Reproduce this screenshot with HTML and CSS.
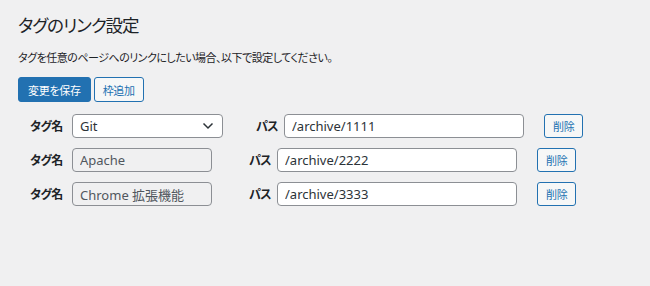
FILE: index.html
```html
<!DOCTYPE html>
<html lang="ja">
<head>
    <meta charset="UTF-8">
    <meta name="viewport" content="width=device-width, initial-scale=1.0">
    <title>タグのリンク設定</title>
    <link rel="stylesheet" href="styles.css">
</head>
<body>
    <div class="wrap">
        <h1 class="page-title">タグのリンク設定</h1>
        <p class="description">タグを任意のページへのリンクにしたい場合、以下で設定してください。</p>

        <div class="actions">
            <button class="button button-primary">変更を保存</button>
            <button class="button">枠追加</button>
        </div>

        <div class="link-rows">
            <div class="link-row">
                <div class="field field-tag field-select">
                    <label class="field-label">タグ名</label>
                    <div class="select">
                        <span>Git</span>
                        <svg class="chevron" width="12" height="8" viewBox="0 0 12 8"><path d="M1.5 1.5 6 6 10.5 1.5" fill="none" stroke="#2c3338" stroke-width="1.5"/></svg>
                    </div>
                </div>
                <div class="field field-path">
                    <label class="field-label">パス</label>
                    <input class="text-input" type="text" value="/archive/1111">
                </div>
                <button class="button button-small">削除</button>
            </div>

            <div class="link-row">
                <div class="field field-tag">
                    <label class="field-label">タグ名</label>
                    <input class="text-input disabled" type="text" value="Apache" disabled>
                </div>
                <div class="field field-path">
                    <label class="field-label">パス</label>
                    <input class="text-input" type="text" value="/archive/2222">
                </div>
                <button class="button button-small">削除</button>
            </div>

            <div class="link-row">
                <div class="field field-tag">
                    <label class="field-label">タグ名</label>
                    <input class="text-input disabled" type="text" value="Chrome 拡張機能" disabled>
                </div>
                <div class="field field-path">
                    <label class="field-label">パス</label>
                    <input class="text-input" type="text" value="/archive/3333">
                </div>
                <button class="button button-small">削除</button>
            </div>
        </div>
    </div>
</body>
</html>
```

FILE: styles.css
```css
body {
    margin: 0;
    background-color: #f0f0f1;
    color: #1d2327;
    font-family: "Noto Sans", "Noto Sans CJK JP", sans-serif;
    font-feature-settings: "palt";
}

.wrap {
    padding: 10px 18px;
}

.page-title {
    margin: 0;
    font-size: 17.5px;
    font-weight: 400;
    line-height: 30px;
    letter-spacing: -1px;
}

.description {
    margin: 9px 0 10px;
    font-size: 11px;
    line-height: 18px;
    letter-spacing: -0.5px;
}

.actions {
    display: flex;
    gap: 3px;
}

.button {
    height: 25px;
    padding: 0 8px;
    border: 1px solid #2271b1;
    border-radius: 3px;
    background-color: #f6f7f7;
    color: #2271b1;
    font-family: inherit;
    font-feature-settings: "palt";
    font-size: 11px;
    letter-spacing: -0.3px;
    cursor: pointer;
}

.button-primary {
    background-color: #2271b1;
    color: #fff;
    padding: 0 9px;
}

.link-rows {
    display: flex;
    flex-direction: column;
    gap: 10px;
    margin-top: 12px;
    padding-left: 12px;
}

.link-row {
    display: flex;
    align-items: center;
}

.field {
    display: flex;
    align-items: center;
}

.field-label {
    font-size: 12px;
    font-weight: 700;
    width: 42px;
    letter-spacing: -0.5px;
}

.field-tag {
    margin-right: 37px;
}

.field-select {
    margin-right: 33px;
}

.field-path .field-label {
    width: 28px;
}

.text-input,
.select {
    box-sizing: border-box;
    height: 24px;
    border: 1px solid #8c8f94;
    border-radius: 4px;
    background-color: #fff;
    color: #2c3338;
    font-family: inherit;
    font-size: 13px;
    padding: 0 7px;
}

.field-tag .text-input {
    width: 140px;
}

.field-path .text-input {
    width: 240px;
}

.text-input.disabled {
    background-color: #f0f0f1;
    border-color: #8c8f94;
    color: #50575e;
}

.select {
    display: flex;
    align-items: center;
    justify-content: space-between;
    width: 151px;
    padding-right: 8px;
}

.button-small {
    height: 24px;
    margin-left: 20px;
    padding: 0 8px;
}
```
